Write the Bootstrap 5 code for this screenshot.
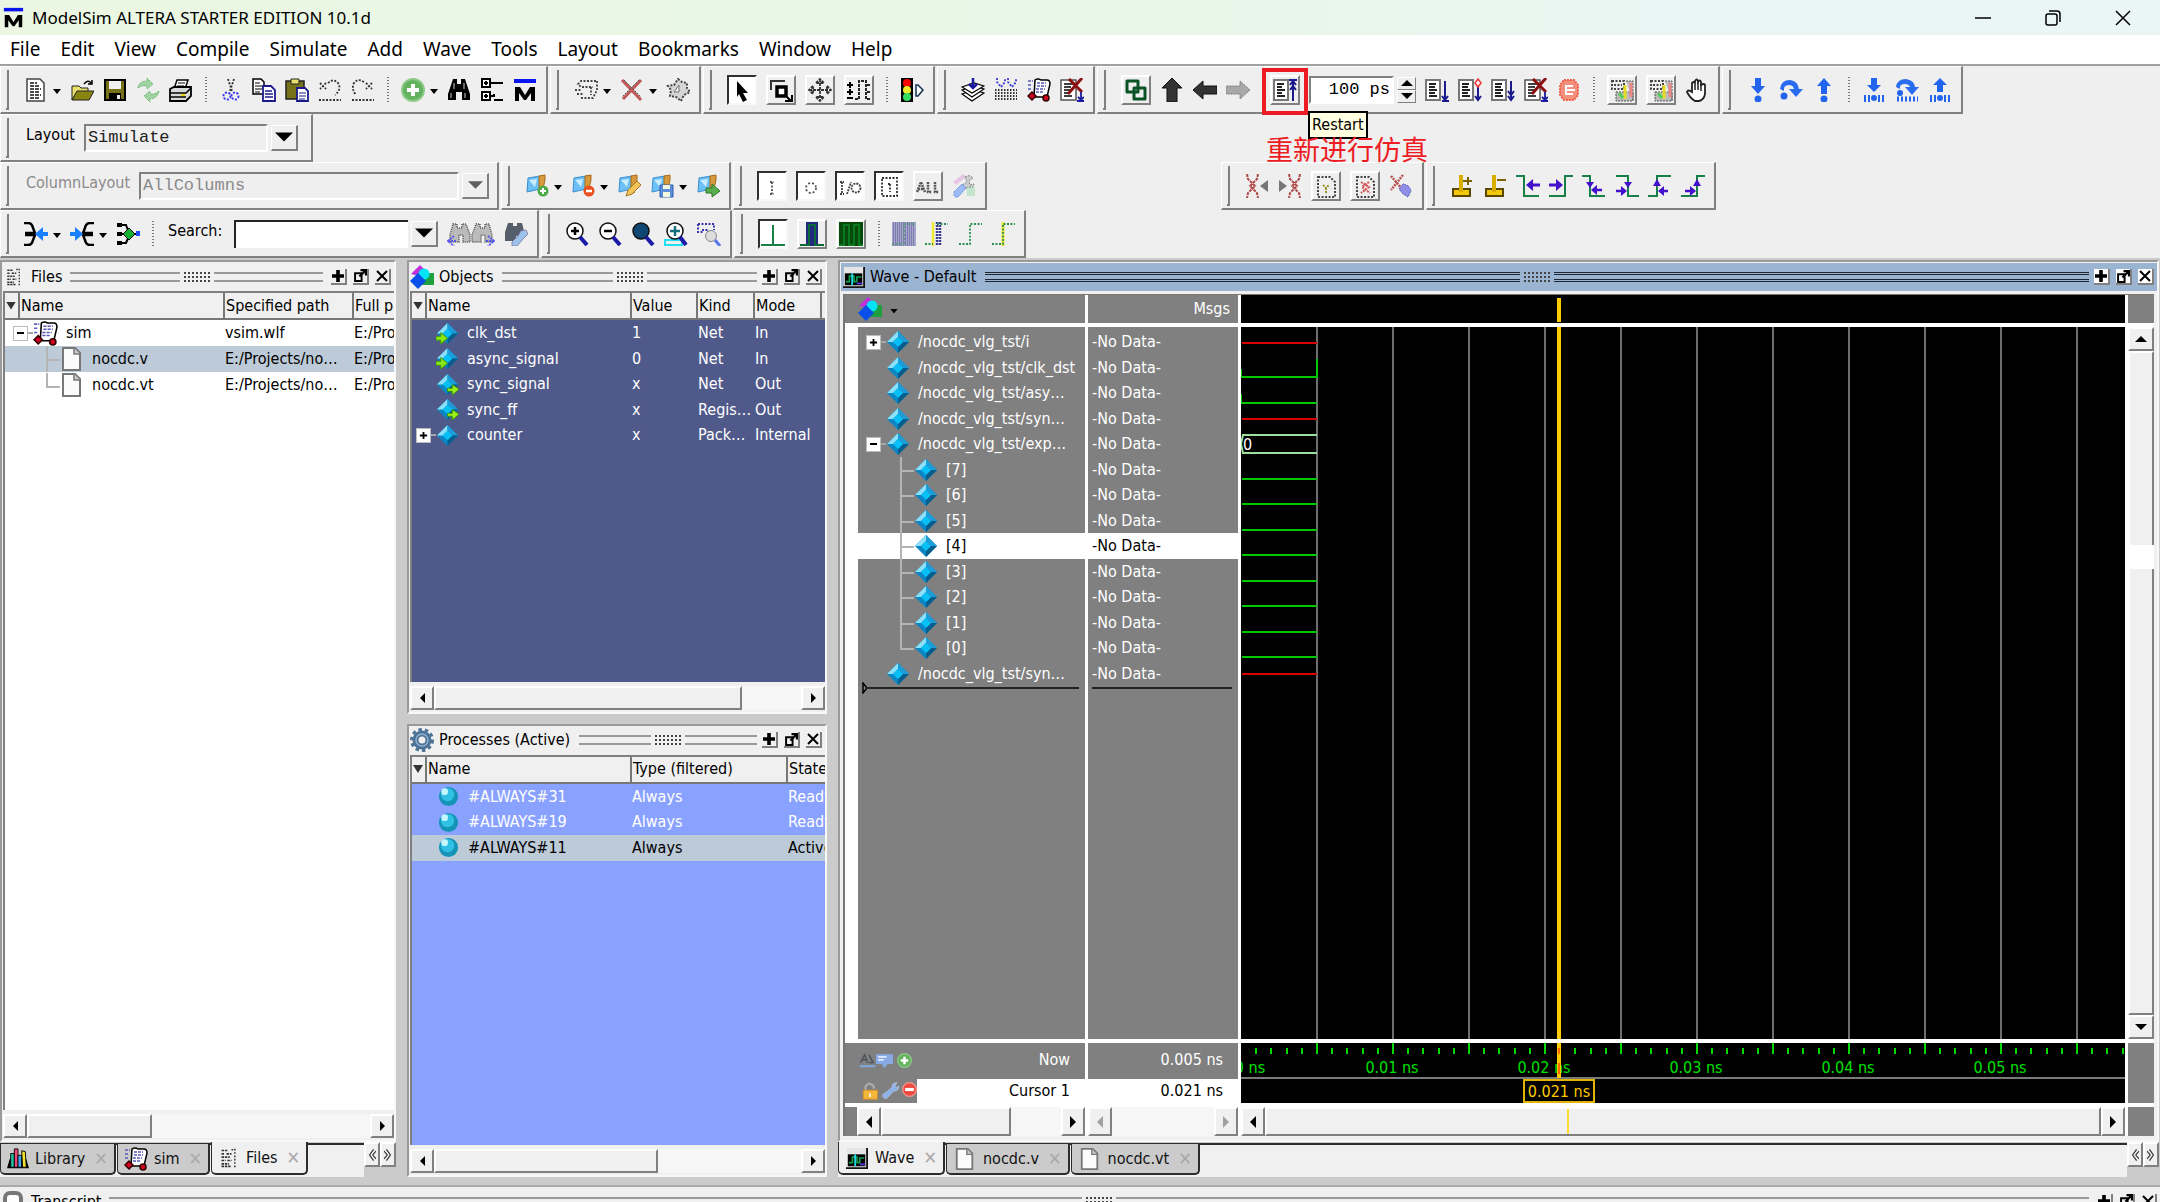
<!DOCTYPE html>
<html lang="en">
<head>
<meta charset="utf-8">
<meta name="viewport" content="width=device-width, initial-scale=1">
<title>ModelSim ALTERA STARTER EDITION 10.1d</title>
<link href="https://cdn.jsdelivr.net/npm/bootstrap@5.3.0/dist/css/bootstrap.min.css" rel="stylesheet">
<style>
  :root { --face:#f0f0f0; --shade:#808080; --desk:#cbcbcb; }
  body { font-family:"DejaVu Sans Condensed","DejaVu Sans",sans-serif; font-size:16px; line-height:20px; color:#000; background:var(--desk); }
  button { font:inherit; color:inherit; padding:0; border:0; background:none; }
  svg { display:block; flex:none; }
  a { color:inherit; text-decoration:none; }

  /* title and menu */
  .titlebar { height:35px; background:linear-gradient(90deg,#ebf7e2,#e8f7e8 55%,#eaf6f5 80%); font-family:"Noto Sans",sans-serif; font-size:17px; padding-left:3px; padding-right:2px; }
  .winbtn { width:70px; height:35px; display:grid; place-items:center; }
  .menubar { height:31px; background:#fff; border-bottom:2px solid #a0a0a0; font-family:"Noto Sans",sans-serif; font-size:19px; gap:20px; padding:0 10px 2px; }

  /* toolbars */
  .toolzone { background:#efefef; }
  .toolrow { height:48px; gap:2px; }
  .tbar { gap:9px; padding:0 9px 0 5px; border:1px solid #fff; border-right:2px solid var(--shade); border-bottom:2px solid var(--shade); height:48px; }
  .grip { width:3px; height:40px; border-right:2px solid var(--shade); border-bottom:2px solid var(--shade); margin-right:6px; }
  .tbar svg { width:24px; height:24px; }
  .tbtn { width:24px; height:26px; flex:none; }
  .framed { width:30px; height:30px; display:grid; place-items:center; border:2px solid #fff; border-right-color:var(--shade); border-bottom-color:var(--shade); flex:none; }
  .pressed { background:#fff; border-color:#303030 #f8f8f8 #f8f8f8 #303030; }
  .caret { width:8px; height:5px; margin-left:-4px; margin-top:4px; background:#000; clip-path:polygon(0 0,100% 0,50% 100%); flex:none; }
  .tsep { width:8px; height:26px; flex:none; background:repeating-linear-gradient(#777 0 1px,transparent 1px 3px) 3px 0/2px 100% no-repeat; }
  .tlabel { font-size:16px; padding-bottom:6px; margin-left:2px; }
  .tlabel-search { width:57px; }
  .mono { font-family:"Liberation Mono",monospace; font-size:17px; }
  .sunk { height:28px; border:2px solid #fff; border-top-color:var(--shade); border-left-color:var(--shade); background:transparent; border-radius:0; padding:0 2px; outline:0; }
  select.sunk { appearance:none; color:#222; opacity:1; }
  select.sunk:disabled, .off { color:#8a8a8a; }
  .dropbtn { width:27px; height:26px; display:grid; place-items:center; border:1px solid #fff; border-right:2px solid var(--shade); border-bottom:2px solid var(--shade); flex:none; }
  .combo { gap:3px; }
  .runlen { width:85px; }
  .spinbtn { width:19px; height:13px; display:grid; place-items:center; border:1px solid #fff; border-right-color:var(--shade); border-bottom-color:var(--shade); }
  .restart-slot { position:relative; margin-left:-6px; }
  .markbox { position:absolute; left:-8px; top:-7px; width:46px; height:47px; border:4px solid #ed1c24; }
  .tipbox { position:absolute; left:38px; top:36px; background:#ffffe1; border:2px solid #000; padding:2px; z-index:3; line-height:20px; }
  .note { position:absolute; left:-4px; top:58px; z-index:4; color:#ed1c24; font:27px/32px "Noto Sans CJK SC",sans-serif; white-space:nowrap; }
  .gapbar { margin-left:232px; }

  /* panes */
  .workspace { display:grid; grid-template-columns:396px 420px 1fr; column-gap:11px; padding:2px 1px 0 0; min-height:0; }
  .pane { background:var(--face); border:2px solid #9a9a9a; border-right-color:#f8f8f8; border-bottom-color:#f8f8f8; min-width:0; min-height:0; }
  .phead { height:29px; padding:0 3px 0 3px; gap:8px; flex:none; }
  .phead-wide { padding-left:1px; gap:5px; }
  .rail { flex:1; height:10px; border-top:2px solid #999; border-bottom:2px solid #999; }
  .rails { gap:3px; flex:1; }
  .dots { width:28px; height:12px; background:radial-gradient(circle,#444 1px,transparent 1px) 0 0/4px 4px; }
  .pbtns { gap:6px; }
  .pbtn { width:16px; height:16px; border-right:2px solid var(--shade); border-bottom:2px solid var(--shade); display:grid; place-items:center; }
  .sheet { border-left:2px solid var(--shade); border-top:2px solid var(--shade); margin:0 0 0 1px; min-height:0; overflow:hidden; }
  .sheet table { table-layout:fixed; width:100%; border-collapse:separate; border-spacing:0; white-space:nowrap; }
  .sheet th { height:27px; font-weight:400; background:var(--face); border-right:2px solid #777; border-bottom:2px solid #777; padding:0 0 0 1px; overflow:hidden; line-height:20px; }
  .sheet th:last-child { border-right:0; }
  .sheet td { padding:0; overflow:hidden; line-height:20px; }
  .sheet tbody tr:nth-child(odd), .wrows li:nth-child(odd) { height:26px; }
  .sheet tbody tr:nth-child(even), .wrows li:nth-child(even) { height:25px; }
  .sorter { width:10px; height:8px; background:#333; clip-path:polygon(0 0,100% 0,50% 100%); }
  .picked td { background:#bdcad7; color:#000; }
  .white { background:#fff; }
  .navy { background:#505a8a; color:#fff; }
  .sky { background:#8aa2ff; color:#fff; }
  .pm { width:15px; height:15px; background:#fff; border:1px solid #bbb; display:grid; place-items:center; flex:none; }
  .stub { width:5px; height:2px; background:#a8a8a8; flex:none; }
  .twig { width:14px; height:26px; border-left:2px solid #b4b4b4; background:linear-gradient(#b4b4b4,#b4b4b4) 0 13px/100% 2px no-repeat; flex:none; }
  .twig-end { height:15px; align-self:flex-start; }
  .in-obj { padding-left:24px; }
  .in-root { padding-left:4px; }
  .in-proc { padding-left:25px; }
  .in-file { padding-left:41px; }

  /* scroll bars */
  .hbar { height:24px; background:#f6f6f6; flex:none; margin:4px 0 2px 1px; }
  .raised { background:var(--face); border:2px solid #fff; border-right-color:var(--shade); border-bottom-color:var(--shade); display:grid; place-items:center; flex:none; }
  .hbar .arrow { width:24px; }

  /* tabs */
  .tabstrip { height:34px; background:var(--face); border-top:2px solid #2c2c2c; flex:none; margin-top:1px; }
  .tabstrip .nav-link { height:31px; padding:0 6px; gap:6px; color:#111; background:#cbcbcb; border:2px solid #2c2c2c; border-top:0; border-left-width:1px; border-radius:0 0 5px 5px; display:flex; align-items:center; margin-top:-1px; margin-right:1px; }
  .tabstrip .nav-link.active { background:var(--face); color:#111; margin-top:-3px; height:33px; }
  .tabx { color:#aaa; margin-left:3px; font-size:18px; }
  .tscroll { width:16px; height:25px; }

  /* wave window */
  .wavehead { background:#9ab4d2; height:28px; margin:1px 0 3px 1px; padding-left:2px; gap:5px; padding-right:3px; }
  .wavehead .rail { border-top:3px double #1c2733; border-bottom:3px double #1c2733; }
  .wavegrid { display:grid; grid-template-columns:240px 150px 1fr 26px; column-gap:3px; background:#fff; margin:0 3px 4px 3px; border-left:2px solid #777; border-top:1px solid #777; min-height:0; }
  .wcol { display:flex; flex-direction:column; gap:4px; min-width:0; min-height:0; }
  .wtop { height:28px; flex:none; }
  .wbody { flex:1; min-height:0; overflow:hidden; }
  .wtime { height:60px; flex:none; }
  .wscroll { height:29px; flex:none; }
  .grey { background:#808080; color:#fff; }
  .black { background:#000; }
  .wrows { list-style:none; margin:0; padding:2px 0 0; white-space:nowrap; }
  .wrows li { display:flex; align-items:center; padding-left:4px; }
  .wrows .w-root { padding-left:8px; }
  .wrows .w-sig { padding-left:28px; }
  .wrows .w-bit { padding-left:42px; }
  .wrows .sel { background:#fff; color:#000; }
  .insrow { height:4px; }
  .insline { height:2px; background:#222; margin:0 6px 0 4px; }
  .nowrow { height:36px; padding-bottom:2px; padding-right:15px; }
  .curval { padding:2px 15px 0 0; }
  .wave-svg { width:100%; height:100%; font-family:"DejaVu Sans Condensed","DejaVu Sans",sans-serif; font-size:16px; }
  .transcript { height:17px; overflow:hidden; background:var(--face); border-top:2px solid #aaa; flex:none; }
</style>
<script src="https://cdn.jsdelivr.net/npm/bootstrap@5.3.0/dist/js/bootstrap.bundle.min.js"></script>
</head>
<body class="vh-100 overflow-hidden d-flex flex-column">

<svg width="0" height="0" class="position-absolute" aria-hidden="true">
  <defs>
    <g id="flagbase"><path d="M3 4l12-2v13l-13 3z" fill="#6cc0f5" stroke="#3a8fd0"/><path d="M4 6l8-1-2 8z" fill="#c9ecff"/><path d="M14 2l6-1v5l-3 13h-3z" fill="#d99a3d" stroke="#a56a1c"/></g>
    <g id="simpage"><path d="M8 2q3-2 6 0h6q3 0 3 4l-3 13H7z" fill="#fff" stroke="#000" stroke-width="1.500"/><path d="M1 3h5M1 7h4M1 11h3M10 5h9M10 8h9M9 11h9M9 14h8" stroke="#5a5ab8" stroke-width="1.500" stroke-dasharray="3 1"/><path d="M1 18l4-4 4 4-4 4z" fill="#d00020" stroke="#300" stroke-width="1.500"/><circle cx="19" cy="20" r="3" fill="#d00020" stroke="#300" stroke-width="1.500"/></g>
  </defs>
  <symbol id="logo" viewBox="0 0 24 24"><path d="M1 1h22v4H1z" fill="#0a14f0"/><path d="M2 23V9h5l5 8 5-8h5v14h-4v-8l-5 7h-2l-5-7v8z"/></symbol>
  <symbol id="new" viewBox="0 0 24 24"><path d="M3 1h13l4 4v18H3z" fill="#fff" stroke="#444" stroke-width="1.500"/><path d="M6 5h7M6 8h9M6 11h11M6 14h9M6 17h11M6 20h9" stroke="#111" stroke-width="1.500" stroke-dasharray="4 1"/></symbol>
  <symbol id="open" viewBox="0 0 24 24"><path d="M2 8h7l2 2h7v4H7l-5 8z" fill="#e8e06a" stroke="#222"/><path d="M2 22l5-9h17l-5 9z" fill="#8a8410" stroke="#222"/><path d="M14 6q4-5 7-1M22 2v4h-4" fill="none" stroke="#000" stroke-width="1.500"/></symbol>
  <symbol id="save" viewBox="0 0 24 24"><path d="M2 2h20v20H2z" fill="#77711a" stroke="#000" stroke-width="2"/><path d="M6 3h12v8H6z" fill="#f0f0f0"/><path d="M6 15h12v7H6z"/><path d="M14 17h3v4h-3z" fill="#eee"/></symbol>
  <symbol id="reload" viewBox="0 0 24 24"><g fill="#9fd3a0" stroke="#6fb572" stroke-dasharray="2 1"><path d="M2 10q1-7 9-7V0l6 6-6 5V8q-5-1-9 2z"/><path d="M23 13q-1 7-9 8v3l-6-6 6-5v3q5 1 9-3z"/></g></symbol>
  <symbol id="print" viewBox="0 0 24 24"><path d="M8 2h11l-3 9H5z" fill="#fff" stroke="#000" stroke-width="1.500"/><path d="M9 5h7M8 8h7" stroke="#000"/><path d="M1 11l4-2h17v9l-5 5H1z" fill="#d8d8d8" stroke="#000" stroke-width="1.800"/><path d="M1 15h16l5-5M1 19h16" fill="none" stroke="#000" stroke-width="1.500"/><path d="M12 16h4v2h-4z" fill="#e6d800"/></symbol>
  <symbol id="cut" viewBox="0 0 24 24"><path d="M9 1l4 12M15 1l-4 12" stroke="#333" stroke-width="1.800" stroke-dasharray="2 1.500"/><g fill="none" stroke="#3a3af0" stroke-width="2" stroke-dasharray="2 1.500"><circle cx="8" cy="18" r="3.500"/><circle cx="16" cy="18" r="3.500"/></g></symbol>
  <symbol id="copy" viewBox="0 0 24 24"><path d="M1 1h8l3 3v12H1z" fill="#fff" stroke="#000" stroke-width="1.500"/><path d="M3 5h5M3 8h7M3 11h7M3 14h5" stroke="#000"/><path d="M11 8h8l4 4v11H11z" fill="#fff" stroke="#1a1a8c" stroke-width="1.800"/><path d="M13 13h7M13 16h8M13 19h8" stroke="#1a1a8c" stroke-width="1.500"/></symbol>
  <symbol id="paste" viewBox="0 0 24 24"><path d="M1 3h18v18H1z" fill="#77711a" stroke="#222" stroke-width="1.500"/><path d="M6 1h8v5H6z" fill="#e8e06a" stroke="#222"/><path d="M12 10h8l3 3v10H12z" fill="#fff" stroke="#1a1a8c" stroke-width="1.800"/><path d="M14 15h7M14 18h7M14 21h6" stroke="#1a1a8c"/></symbol>
  <symbol id="undo" viewBox="0 0 24 24"><path d="M2 5l6 6M8 5l-6 6M10 5q5-5 10 0 4 6-3 12M1 22h22" fill="none" stroke="#333" stroke-width="1.800" stroke-dasharray="2 1.500"/></symbol>
  <symbol id="redo" viewBox="0 0 24 24"><path d="M15 5l6 6M21 5l-6 6M13 4Q7 0 3 5q-3 6 2 12M1 22h22" fill="none" stroke="#333" stroke-width="1.800" stroke-dasharray="2 1.500"/></symbol>
  <symbol id="plus" viewBox="0 0 24 24"><circle cx="12" cy="12" r="11" fill="#62b25f" stroke="#8ccb86" stroke-width="2"/><path d="M12 6v12M6 12h12" stroke="#fff" stroke-width="4"/></symbol>
  <symbol id="minus" viewBox="0 0 24 24"><circle cx="12" cy="12" r="11" fill="#ee4a42" stroke="#f49a90" stroke-width="2"/><path d="M5 12h14" stroke="#fff" stroke-width="5"/></symbol>
  <symbol id="find" viewBox="0 0 24 24"><path d="M6 1h4v5h4V1h4l2 6 3 9v6h-8v-8H9v8H1v-6l3-9z"/><path d="M4 15v5M18 15v5M7 5v6M17 5v6" stroke="#ccc"/></symbol>
  <symbol id="boxes" viewBox="0 0 24 24"><path d="M2 1h8v8H2zM2 14h8v8H2z" fill="#fff" stroke="#000" stroke-width="2"/><path d="M4 5h4M6 3v4M4 18h4M6 16v4M10 5h13M10 18h4v-2M14 22h9" fill="none" stroke="#000" stroke-width="2"/></symbol>
  <symbol id="compile" viewBox="0 0 24 24"><path d="M22 3H7L4 6l3 3h12M23 3v9l-4 8H6M1 12h6M3 16h6M17 9v8" fill="none" stroke="#444" stroke-width="1.800" stroke-dasharray="2 1.500"/></symbol>
  <symbol id="redx" viewBox="0 0 24 24"><path d="M2 2l19 20M21 2L3 21" stroke="#c05858" stroke-width="3"/><path d="M4 2l17 17M19 2L2 19" stroke="#555" stroke-dasharray="2 1"/></symbol>
  <symbol id="gearoff" viewBox="0 0 24 24"><path d="M12 1l4 3 5 1v5l3 4-6 3-3 6-5-4-6-1 1-6-3-4 6-1z" fill="#d5d5d5" stroke="#444" stroke-width="2" stroke-dasharray="2 1.500"/><path d="M8 14l5-7v7z" fill="#eee" stroke="#777"/></symbol>
  <symbol id="cursor" viewBox="0 0 24 24"><path d="M7 3l11 12h-5l4 7-4 2-4-8-2 3z"/></symbol>
  <symbol id="zoomsel" viewBox="0 0 24 24"><path d="M2 12V3h14" fill="none" stroke="#333" stroke-width="2"/><path d="M8 9h9v9H8z" fill="#fff" stroke="#000" stroke-width="3.500"/><path d="M18 19l4 4m1-6v6h-7" fill="none" stroke="#000" stroke-width="2"/></symbol>
  <symbol id="move" viewBox="0 0 24 24"><path d="M12 1v22M1 12h22M8 5l4-4 4 4zM8 19l4 4 4-4zM5 8l-4 4 4 4zM19 8l4 4-4 4z" fill="#fff" stroke="#333" stroke-width="1.800" stroke-dasharray="3 1"/></symbol>
  <symbol id="edges" viewBox="0 0 24 24"><path d="M0 7h6M0 14h6M0 20h6M3 4v6M3 11v6" stroke="#000" stroke-width="2"/><path d="M8 21h4V3h7v18h4M20 7h4M20 14h4" fill="none" stroke="#222" stroke-width="2" stroke-dasharray="3 1"/></symbol>
  <symbol id="traffic" viewBox="0 0 24 24"><path d="M1 0h12v24H1z"/><circle cx="7" cy="5" r="4" fill="#f00"/><circle cx="7" cy="12" r="4" fill="#eeea30"/><circle cx="7" cy="19" r="4" fill="#35e060"/><path d="M16 7h2l5 5-5 6h-2z" fill="#fff" stroke="#135" stroke-width="1.500"/></symbol>
  <symbol id="stack" viewBox="0 0 24 24"><g fill="#fff" stroke="#000" stroke-width="1.200"><path d="M1 16l12-4 10 3-12 8z"/><path d="M1 12l12-4 10 3-12 8z"/><path d="M1 9l12-4 10 3-12 7z"/></g><path d="M12 0v9M8 6l4 4 4-4" stroke="#1a1aa0" stroke-width="2.500" fill="none"/></symbol>
  <symbol id="stackoff" viewBox="0 0 24 24"><path d="M3 0v4l4 5 4-5V0M14 0v4l4 5 4-5V0" fill="none" stroke="#3a3ad0" stroke-width="1.800" stroke-dasharray="2 1.500"/><path d="M1 12h22M1 15h22M1 18h22M1 21h22" stroke="#333" stroke-width="1.800" stroke-dasharray="1.500 1.500"/></symbol>
  <symbol id="sim" viewBox="0 0 24 24"><use href="#simpage"/></symbol>
  <symbol id="simstop" viewBox="0 0 24 24"><path d="M1 2h15v20H1z" fill="#fff" stroke="#555" stroke-width="1.500"/><path d="M4 6h9M4 9h7M4 12h8M4 15h6M4 18h8" stroke="#000" stroke-width="1.500"/><path d="M9 1l13 13M22 0L8 16" stroke="#8b1010" stroke-width="3"/><path d="M21 14v8M18 19l3 3 3-3M17 23h7" stroke="#1a1aa0" stroke-width="1.800" fill="none"/></symbol>
  <symbol id="env" viewBox="0 0 24 24"><path d="M3 3h11v11H3zM10 10h11v11H10z" fill="none" stroke="#0b5224" stroke-width="3" stroke-linejoin="round"/></symbol>
  <symbol id="up" viewBox="0 0 24 24"><path d="M12 0l10 10h-5v14H7V10H2z" fill="#333" stroke="#111"/></symbol>
  <symbol id="left" viewBox="0 0 24 24"><path d="M0 12l10-9v5h14v8H10v5z" fill="#333" stroke="#111"/></symbol>
  <symbol id="right" viewBox="0 0 24 24"><path d="M24 12l-10-9v5H0v8h14v5z" fill="#a8a8a8" stroke="#777" stroke-dasharray="2 1"/></symbol>
  <symbol id="restart" viewBox="0 0 24 24"><path d="M1 2h14v20H1z" fill="#fff" stroke="#777" stroke-width="2"/><path d="M4 6h7M4 9h5M4 12h8M4 15h5M4 18h8" stroke="#222" stroke-width="1.800"/><path d="M20 23V3M16 2h8M17 7l3-4 3 4M17 12l3-4 3 4" fill="none" stroke="#1a1a8c" stroke-width="2"/></symbol>
  <symbol id="run1" viewBox="0 0 24 24"><path d="M1 2h14v20H1z" fill="#fff" stroke="#777" stroke-width="2"/><path d="M4 6h7M4 9h6M4 12h8M4 15h6M4 18h8" stroke="#222" stroke-width="1.800"/><path d="M20 3v19M17 18l3 4 3-4M17 23h7" fill="none" stroke="#1a1a8c" stroke-width="2"/></symbol>
  <symbol id="run2" viewBox="0 0 24 24"><path d="M1 2h14v20H1z" fill="#fff" stroke="#777" stroke-width="2"/><path d="M4 6h7M4 9h6M4 12h8M4 15h6M4 18h8" stroke="#222" stroke-width="1.800"/><path d="M20 8v14M17 18l3 4 3-4" fill="none" stroke="#1a1a8c" stroke-width="2"/><path d="M20 1l3 4-3 4-3-4z" fill="#fff" stroke="#e33" stroke-width="1.500"/></symbol>
  <symbol id="run3" viewBox="0 0 24 24"><path d="M1 2h14v20H1z" fill="#fff" stroke="#777" stroke-width="2"/><path d="M4 6h7M4 9h6M4 12h8M4 15h6M4 18h8" stroke="#222" stroke-width="1.800"/><path d="M20 3v19M17 13l3 4 3-4M17 18l3 4 3-4" fill="none" stroke="#1a1a8c" stroke-width="2"/></symbol>
  <symbol id="stop" viewBox="0 0 24 24"><path d="M7 2h10l4 5v10l-4 5H7l-4-5V7z" fill="#f3907c" stroke="#ef5f48" stroke-width="2" stroke-dasharray="2 1"/><path d="M16 8H9v8h7M9 12h9" fill="none" stroke="#fff" stroke-width="2"/></symbol>
  <symbol id="prof" viewBox="0 0 24 24"><path d="M2 3h12v8H2zM4 7h8" fill="none" stroke="#444" stroke-width="2" stroke-dasharray="2 1.500"/><path d="M6 14h17v9H6zM16 3h7v20" fill="#bbb" stroke="#555" stroke-dasharray="2 1"/><path d="M15 7v14" stroke="#e6dc28" stroke-width="3"/><path d="M21 5v14" stroke="#e88" stroke-width="3"/><path d="M9 15l4 5" stroke="#5c5" stroke-width="3"/></symbol>
  <symbol id="hand" viewBox="0 0 24 24"><path d="M7 14V5q2-2 3 0V3q2-3 3 0v1q2-3 3 0v3q3-2 4 0v9q-1 6-6 7h-4q-5-3-8-9 1-3 5 0z" fill="#fff" stroke="#222" stroke-width="1.800"/><path d="M10 5v7M13 4v8M16 6v7" stroke="#222" stroke-width="1.500"/></symbol>
  <symbol id="stepin" viewBox="0 0 24 24"><path d="M9 0h6v8h4l-7 8-7-8h4z" fill="#2264ee"/><circle cx="12" cy="21" r="3.500" fill="#2264ee"/></symbol>
  <symbol id="stepover" viewBox="0 0 24 24"><path d="M1 11Q2 2 11 2q8 1 9 9h4l-7 8-7-8h5q-1-4-5-4-6 0-5 6z" fill="#2a6cf0"/><circle cx="5" cy="18" r="3.500" fill="#2264ee"/></symbol>
  <symbol id="stepout" viewBox="0 0 24 24"><path d="M9 16h6V8h4l-7-8-7 8h4z" fill="#2264ee"/><circle cx="12" cy="21" r="3.500" fill="#2264ee"/></symbol>
  <symbol id="stepinc" viewBox="0 0 24 24"><path d="M9 0h6v7h4l-7 7-7-7h4z" fill="#2264ee"/><path d="M3 17v7M7 17v7M17 17v7M21 17v7" stroke="#2264ee" stroke-width="2"/><circle cx="12" cy="20" r="3" fill="#2264ee"/></symbol>
  <symbol id="stepoverc" viewBox="0 0 24 24"><path d="M1 9Q2 1 11 1q8 1 9 8h4l-7 8-7-8h5q-1-3-5-3-6 0-5 5z" fill="#2a6cf0"/><circle cx="5" cy="15" r="3" fill="#2264ee"/><path d="M2 21h21" stroke="#2264ee" stroke-width="5" stroke-dasharray="2 2"/></symbol>
  <symbol id="stepoutc" viewBox="0 0 24 24"><path d="M9 14h6V7h4l-7-7-7 7h4z" fill="#2264ee"/><path d="M3 17v7M7 17v7M17 17v7M21 17v7" stroke="#2264ee" stroke-width="2"/><circle cx="12" cy="20" r="3" fill="#2264ee"/></symbol>
  <symbol id="bmadd" viewBox="0 0 24 24"><use href="#flagbase"/><circle cx="18" cy="17" r="5.500" fill="#4fa84a"/><path d="M18 14v6M15 17h6" stroke="#fff" stroke-width="2"/></symbol>
  <symbol id="bmdel" viewBox="0 0 24 24"><use href="#flagbase"/><circle cx="18" cy="17" r="5.500" fill="#e8501e"/><path d="M15 17h6" stroke="#fff" stroke-width="2.500"/></symbol>
  <symbol id="bmedit" viewBox="0 0 24 24"><use href="#flagbase"/><path d="M9 22l2-6 9-9 4 4-9 9z" fill="#f2c45a" stroke="#a87820"/></symbol>
  <symbol id="bmsave" viewBox="0 0 24 24"><use href="#flagbase"/><path d="M10 11h13v12H10z" fill="#5b8edb" stroke="#2c5faf"/><path d="M13 11h7v4h-7zM13 18h7v5h-7z" fill="#f2f8e0"/></symbol>
  <symbol id="bmgo" viewBox="0 0 24 24"><use href="#flagbase"/><path d="M10 14h6v-4l8 7-8 6v-4h-6z" fill="#58ad4d" stroke="#2f7a28"/></symbol>
  <symbol id="sI" viewBox="0 0 24 24"><path d="M10 8h4M12 8v12M10 20h4" stroke="#555" stroke-width="1.800" stroke-dasharray="2 1.500"/></symbol>
  <symbol id="sO" viewBox="0 0 24 24"><circle cx="12" cy="14" r="5" fill="none" stroke="#555" stroke-width="1.800" stroke-dasharray="2 2"/></symbol>
  <symbol id="sIO" viewBox="0 0 24 24"><path d="M4 8v12M2 8h4M2 20h4M9 20l4-12" stroke="#444" stroke-width="1.800" stroke-dasharray="2 1"/><circle cx="18" cy="14" r="4.500" fill="none" stroke="#444" stroke-width="1.800" stroke-dasharray="2 1"/></symbol>
  <symbol id="sBox" viewBox="0 0 24 24"><path d="M5 4h15v18H5zM13 10v8M11 10h3" fill="none" stroke="#333" stroke-width="1.800" stroke-dasharray="2 1.500"/></symbol>
  <symbol id="sAll" viewBox="0 0 24 24"><path d="M1 18l4-10 4 10M2 15h6M12 8v10h4M19 8v10h4" fill="none" stroke="#555" stroke-width="2.500" stroke-dasharray="2 .8"/></symbol>
  <symbol id="tools" viewBox="0 0 24 24"><path d="M1 8l10-8 3 3L4 11z" fill="#e6c6e4"/><path d="M14 8l9 5v9h-8z" fill="#c4e4cc"/><path d="M13 3q5-3 8 1l-4 3 1 4 4-1q0 4-6 3l-3 2-3-4 5-3z" fill="#ccc" stroke="#888" stroke-dasharray="2 1"/><path d="M2 18l8-8 4 4-8 9q-5 1-4-5z" fill="#9dbcf5" stroke="#6688e0" stroke-dasharray="2 1"/></symbol>
  <symbol id="xl" viewBox="0 0 24 24"><path d="M2 0l1 5 7 7-7 7-1 5M13 0l-1 5-7 7 7 7 1 5" fill="none" stroke="#b04848" stroke-width="2" stroke-dasharray="3 1"/><path d="M23 6v12l-8-6z" fill="#777"/></symbol>
  <symbol id="xr" viewBox="0 0 24 24"><path d="M11 0l1 5 7 7-7 7-1 5M22 0l-1 5-7 7 7 7 1 5" fill="none" stroke="#b04848" stroke-width="2" stroke-dasharray="3 1"/><path d="M1 6v12l8-6z" fill="#777"/></symbol>
  <symbol id="pgy" viewBox="0 0 24 24"><path d="M4 3h12l5 5v15H4z" fill="none" stroke="#444" stroke-width="2" stroke-dasharray="2 1.500"/><path d="M9 11l3 3 3-3M12 14v6" fill="none" stroke="#9a9420" stroke-width="2" stroke-dasharray="2 1"/></symbol>
  <symbol id="pgx" viewBox="0 0 24 24"><path d="M4 3h12l5 5v15H4z" fill="none" stroke="#444" stroke-width="2" stroke-dasharray="2 1.500"/><path d="M8 8l8 5-8 6M16 8l-7 5 8 6" fill="none" stroke="#d45050" stroke-width="2" stroke-dasharray="2 1"/></symbol>
  <symbol id="xb" viewBox="0 0 24 24"><path d="M2 2l12 14M14 1L2 16" stroke="#b85050" stroke-width="2.500" stroke-dasharray="2 1"/><path d="M14 10q7 1 8 7l-3 6-5-3-4-5z" fill="#8f8fe8" stroke="#3535b0" stroke-dasharray="1 1"/></symbol>
  <symbol id="curadd" viewBox="0 0 24 24"><path d="M3 15h17v7H3z" fill="#f2c80a" stroke="#5a4800" stroke-width="2"/><path d="M11 1v17" stroke="#d8ae00" stroke-width="4"/><path d="M13 7h9M18 3v8" stroke="#7a6200" stroke-width="2"/></symbol>
  <symbol id="curdel" viewBox="0 0 24 24"><path d="M3 15h17v7H3z" fill="#f2c80a" stroke="#5a4800" stroke-width="2"/><path d="M11 1v17" stroke="#d8ae00" stroke-width="4"/><path d="M14 6h9" stroke="#7a6200" stroke-width="2"/></symbol>
  <symbol id="tprev" viewBox="0 0 24 24"><path d="M0 2h8v20h15" fill="none" stroke="#178048" stroke-width="2"/><path d="M24 11h-8" stroke="#4410cc" stroke-width="3"/><path d="M17 5l-7 6 7 6z" fill="#4410cc"/></symbol>
  <symbol id="tnext" viewBox="0 0 24 24"><path d="M0 22h16V2h8" fill="none" stroke="#178048" stroke-width="2"/><path d="M0 11h8" stroke="#4410cc" stroke-width="3"/><path d="M7 5l7 6-7 6z" fill="#4410cc"/></symbol>
  <symbol id="fprev" viewBox="0 0 24 24"><path d="M0 2h8v20h15" fill="none" stroke="#178048" stroke-width="2"/><path d="M4 8h8l-4 6zM9 16l6-5v10z" fill="#4410cc"/><path d="M13 16h7" stroke="#4410cc" stroke-width="2.500"/></symbol>
  <symbol id="fnext" viewBox="0 0 24 24"><path d="M1 2h12v20h11" fill="none" stroke="#178048" stroke-width="2"/><path d="M9 8h8l-4 6zM12 17l-6-5v10z" fill="#4410cc"/><path d="M1 17h6" stroke="#4410cc" stroke-width="2.500"/></symbol>
  <symbol id="rprev" viewBox="0 0 24 24"><path d="M0 22h9V2h14" fill="none" stroke="#178048" stroke-width="2"/><path d="M5 12h8L9 5zM10 17l6-5v10z" fill="#4410cc"/><path d="M14 17h6" stroke="#4410cc" stroke-width="2.500"/></symbol>
  <symbol id="rnext" viewBox="0 0 24 24"><path d="M0 22h16V2h8" fill="none" stroke="#178048" stroke-width="2"/><path d="M12 12h8l-4-7zM15 17l-6-5v10z" fill="#4410cc"/><path d="M4 17h6" stroke="#4410cc" stroke-width="2.500"/></symbol>
  <symbol id="ebrace" viewBox="0 0 24 24"><path d="M0 1h4q4 0 5 5l2 5H1M1 13h10l-2 5q-1 5-5 5H0" fill="none" stroke="#000" stroke-width="2.500"/><path d="M24 12h-6" stroke="#1a80ff" stroke-width="4"/><path d="M19 5l-8 7 8 7z" fill="#1a80ff"/></symbol>
  <symbol id="ebrace2" viewBox="0 0 24 24"><path d="M24 1h-4q-4 0-5 5l-2 5h10M23 13H13l2 5q1 5 5 5h4" fill="none" stroke="#000" stroke-width="2.500"/><path d="M0 12h6" stroke="#1a80ff" stroke-width="4"/><path d="M5 5l8 7-8 7z" fill="#1a80ff"/></symbol>
  <symbol id="fan" viewBox="0 0 24 24"><path d="M4 3h6l3 8M4 12h6M4 21h6l3-7M15 12h9" fill="none" stroke="#000" stroke-width="2"/><path d="M1 1h5v4H1zM1 10h5v4H1zM1 19h5v4H1z"/><path d="M13 6l6 6-6 6-6-6z" stroke="#000" fill="#18b030"/><path d="M20 9h4v5h-4z" fill="#1a50ff"/></symbol>
  <symbol id="findoff" viewBox="0 0 24 24"><path d="M6 2h4v4h5V2h4l4 11v7h-7v-7h-4v7H3v-7z" fill="#bbb" stroke="#555" stroke-width="1.500" stroke-dasharray="1 1"/><path d="M7 14l-6 5 6 5M1 19h8" fill="none" stroke="#5555f0" stroke-width="2" stroke-dasharray="2 1"/></symbol>
  <symbol id="findoff2" viewBox="0 0 24 24"><path d="M5 2h4v4h5V2h4l3 11v7h-7v-7h-4v7H1v-7z" fill="#bbb" stroke="#555" stroke-width="1.500" stroke-dasharray="1 1"/><path d="M17 14l6 5-6 5M15 19h8" fill="none" stroke="#5555f0" stroke-width="2" stroke-dasharray="2 1"/></symbol>
  <symbol id="findopt" viewBox="0 0 24 24"><path d="M4 1h5v3h4V1h5l2 8-4 5h-4v5H1v-9z" fill="#555f6b"/><path d="M17 9l5-1 2 4-5 5-6 7h-5v-4l6-6z" fill="#9cc2ee" stroke="#88a"/></symbol>
  <symbol id="zin" viewBox="0 0 24 24"><circle cx="10" cy="9" r="8" fill="#fff" stroke="#111" stroke-width="1.500"/><path d="M10 5v8M6 9h8" stroke="#000" stroke-width="2.500"/><path d="M15 15l7 8" stroke="#1a1aa8" stroke-width="4"/></symbol>
  <symbol id="zout" viewBox="0 0 24 24"><circle cx="10" cy="9" r="8" fill="#fff" stroke="#111" stroke-width="1.500"/><path d="M6 9h8" stroke="#000" stroke-width="2.500"/><path d="M15 15l7 8" stroke="#1a1aa8" stroke-width="4"/></symbol>
  <symbol id="zfull" viewBox="0 0 24 24"><circle cx="10" cy="9" r="8" fill="#0e4674" stroke="#111" stroke-width="1.500"/><path d="M15 15l7 8" stroke="#1a1aa8" stroke-width="4"/></symbol>
  <symbol id="zcur" viewBox="0 0 24 24"><path d="M1 18h17v5H1z" fill="none" stroke="#22e0f0" stroke-width="2"/><circle cx="11" cy="9" r="8" fill="#fff" stroke="#111" stroke-width="1.500"/><path d="M11 4v10M6 9h10" stroke="#18707c" stroke-width="2.500"/><path d="M16 15l6 8" stroke="#1a1aa8" stroke-width="4"/></symbol>
  <symbol id="zarea" viewBox="0 0 24 24"><path d="M1 2h16v6M1 2v8h6M5 8h6v10h5" fill="none" stroke="#3434b0" stroke-width="2" stroke-dasharray="2 1.500"/><circle cx="14" cy="14" r="5.500" fill="#ddd" stroke="#888"/><path d="M18 18l5 6" stroke="#5878e8" stroke-width="3"/></symbol>
  <symbol id="w1" viewBox="0 0 24 24"><path d="M0 23h24M12 23V3" stroke="#178048" stroke-width="2" fill="none"/></symbol>
  <symbol id="w2" viewBox="0 0 24 24"><path d="M6 0h12v24H6z" fill="#222a80"/><path d="M0 23h9V3h6v20h9" stroke="#0b6a38" stroke-width="2" fill="none"/></symbol>
  <symbol id="w3" viewBox="0 0 24 24"><path d="M0 0h24v24H0z" fill="#064a0c"/><path d="M0 23h5V3h5v20h5V3h5v20h4" stroke="#0b8a28" stroke-width="1.500" fill="none"/></symbol>
  <symbol id="w4" viewBox="0 0 24 24"><path d="M1 1h22M1 3h22M1 5h22M1 7h22M1 9h22M1 11h22M1 13h22M1 15h22M1 17h22M1 19h22M1 21h22M1 23h22" stroke="#3a3a90" stroke-width="1" stroke-dasharray="1 1"/><path d="M0 0h24v24H0z" fill="#6a6aa8" opacity=".55"/><path d="M0 22h12V2h12" stroke="#5a9a80" fill="none" stroke-width="2" stroke-dasharray="2 2"/></symbol>
  <symbol id="w5" viewBox="0 0 24 24"><path d="M12 0v24M15 0v24" stroke="#3a3a90" stroke-width="2.500" stroke-dasharray="2 1"/><path d="M8 0v24" stroke="#f0ea30" stroke-width="2.500"/><path d="M0 22h8M12 2h11" stroke="#2a9050" stroke-width="2" stroke-dasharray="2 1.500"/></symbol>
  <symbol id="w6" viewBox="0 0 24 24"><path d="M1 22h11V2h12" stroke="#2a9050" stroke-width="1.800" fill="none" stroke-dasharray="2 1.500"/></symbol>
  <symbol id="w7" viewBox="0 0 24 24"><path d="M12 0v24" stroke="#f0ea30" stroke-width="3"/><path d="M1 22h11V2h12" stroke="#2a9050" stroke-width="1.800" fill="none" stroke-dasharray="2 1.500"/></symbol>
  <symbol id="listico" viewBox="0 0 24 24"><path d="M3 3h8M3 7h4M9 7h6M3 11h10M3 15h5M10 15h5M3 19h9M3 22h12" stroke="#333" stroke-width="2" stroke-dasharray="3 1"/><path d="M19 1v22M15 2h4" stroke="#333" stroke-width="1.800" stroke-dasharray="2 2"/></symbol>
  <symbol id="shapes" viewBox="0 0 24 24"><path d="M1 9l9-9 6 6-6 5z" fill="#c030d8"/><path d="M12 8h12v12H12z" fill="#1ea040"/><circle cx="14" cy="9" r="5.500" fill="#00e4f8"/><path d="M0 16l8-8 8 8-8 8z" fill="#0a50e8"/></symbol>
  <symbol id="gear" viewBox="0 0 24 24"><circle cx="12" cy="12" r="6.500" fill="none" stroke="#4d7296" stroke-width="6"/><circle cx="12" cy="12" r="10.500" fill="none" stroke="#4d7296" stroke-width="3" stroke-dasharray="3.500 3"/><circle cx="12" cy="12" r="6" fill="none" stroke="#8db0cf" stroke-width="1.500"/></symbol>
  <symbol id="waveico" viewBox="0 0 24 24"><path d="M1 1h22v22H1z" fill="#e4e4e4"/><path d="M0 23h23V1" fill="none" stroke="#111" stroke-width="2"/><path d="M2 8h19v13H2z"/><path d="M3 17h4v-6h5v6h3v-5h5" fill="none" stroke="#12a050" stroke-width="1.800"/><path d="M10 8v13" stroke="#20d8e8" stroke-width="2"/><path d="M15 19h6" stroke="#53d" stroke-width="2"/></symbol>
  <symbol id="dia" viewBox="0 0 24 24"><path d="M12 1L1 12l11 11 11-11z" fill="#0b86c4"/><path d="M12 1L1 12h6l5-5z" fill="#8be0fa"/><path d="M12 1l11 11h-6l-5-5z" fill="#1c9cd8"/><path d="M23 12L12 23v-6l5-5z" fill="#075d8c"/><path d="M12 7l5 5-5 5-5-5z" fill="#06bff5"/></symbol>
  <symbol id="diain" viewBox="0 0 24 24"><use href="#dia"/><path d="M0 15h5v-4l7 6-7 6v-4H0z" fill="#8ce812" stroke="#3a9a08"/></symbol>
  <symbol id="diaout" viewBox="0 0 24 24"><use href="#dia"/><path d="M12 16h5v-4l7 5-7 6v-4h-5z" fill="#9cf018" stroke="#3a9a08"/></symbol>
  <symbol id="ball" viewBox="0 0 24 24"><circle cx="12" cy="12" r="10" fill="#1594b8"/><circle cx="11" cy="10" r="7" fill="#2fc0e4"/><circle cx="8" cy="7" r="3.500" fill="#c4f6ff"/></symbol>
  <symbol id="file" viewBox="0 0 24 24"><path d="M3 1h12l5 5v17H3z" fill="#fbfbfb" stroke="#777" stroke-width="2"/><path d="M14 1v6h6" fill="#ccc" stroke="#777" stroke-width="1.500"/></symbol>
  <symbol id="books" viewBox="0 0 24 24"><path d="M0 22L3 12h18l3 10z"/><path d="M4 6h4v15H4z" fill="#20c0a0" stroke="#000"/><path d="M8 1h4v20H8z" fill="#f04878" stroke="#000"/><path d="M12 8h4v13h-4z" fill="#40a8f0" stroke="#000"/><path d="M16 3l4 1 1 17h-4z" fill="#f0e030" stroke="#000"/></symbol>
  <symbol id="lock" viewBox="0 0 24 24"><path d="M6 12V6q5-8 11 0v3" fill="none" stroke="#aaa" stroke-width="3"/><path d="M3 11h19v12H3z" fill="#f5b63c" stroke="#d98e1e"/><path d="M12 15v5" stroke="#fff" stroke-width="2"/></symbol>
  <symbol id="wrench" viewBox="0 0 24 24"><path d="M14 8q0-7 7-7l-3 5 3 2 3-3q0 8-8 8L7 23q-6 1-6-5z" fill="#8cb0ea" stroke="#b8cce8"/></symbol>
  <symbol id="pal" viewBox="0 0 24 24"><path d="M0 3h24v14h-8l-4 6-4-6H0z" fill="#88aae4"/><path d="M3 7h12M3 11h8" stroke="#dfeaff" stroke-width="2.500"/></symbol>
  <symbol id="ab" viewBox="0 0 24 24"><path d="M2 15L8 4l4 11M5 11h6M14 4l6 11h-6" fill="none" stroke="#4c5158" stroke-width="2"/><path d="M1 20h22" stroke="#7fa8d8" stroke-width="3"/></symbol>
  <symbol id="pin" viewBox="0 0 10 10"><path d="M5 0v10M0 5h10" stroke="#000" stroke-width="3"/></symbol>
  <symbol id="pms" viewBox="0 0 10 10"><path d="M5 1v8M1 5h8" stroke="#000" stroke-width="2"/></symbol>
  <symbol id="undock" viewBox="0 0 12 12"><path d="M1 4h6v7H1z" fill="none" stroke="#000" stroke-width="1.800"/><path d="M5 7l5-5M6 1h5v5" fill="none" stroke="#000" stroke-width="2"/></symbol>
  <symbol id="shut" viewBox="0 0 12 12"><path d="M1 1l10 10M11 1L1 11" stroke="#000" stroke-width="2"/></symbol>
  <symbol id="al" viewBox="0 0 8 12"><path d="M7 0v12L1 6z"/></symbol>
  <symbol id="ar" viewBox="0 0 8 12"><path d="M1 0v12l6-6z"/></symbol>
  <symbol id="au" viewBox="0 0 12 8"><path d="M0 7h12L6 1z"/></symbol>
  <symbol id="ad" viewBox="0 0 12 8"><path d="M0 1h12L6 7z"/></symbol>
  <symbol id="gl" viewBox="0 0 10 14"><path d="M7 0L2 7l5 7M10 2L6 7l4 5" fill="none" stroke="#333" stroke-width="1.500"/></symbol>
  <symbol id="gr" viewBox="0 0 10 14"><path d="M3 0l5 7-5 7M0 2l4 5-4 5" fill="none" stroke="#333" stroke-width="1.500"/></symbol>
</svg>

<header class="titlebar d-flex align-items-center flex-shrink-0">
  <svg width="21" height="21"><use href="#logo"/></svg>
  <span class="ms-2 me-auto">ModelSim ALTERA STARTER EDITION 10.1d</span>
  <button class="winbtn" aria-label="Minimize"><svg width="16" height="16"><path d="M0 8h16" stroke="#000" stroke-width="1.500"/></svg></button>
  <button class="winbtn" aria-label="Restore"><svg width="16" height="16" fill="none" stroke="#000" stroke-width="1.500"><rect x="1" y="4" width="11" height="11" rx="2"/><path d="M4 1h8q3 0 3 3v8"/></svg></button>
  <button class="winbtn" aria-label="Close"><svg width="16" height="16"><path d="M1 1l14 14M15 1L1 15" stroke="#000" stroke-width="1.500"/></svg></button>
</header>

<nav class="menubar d-flex align-items-center flex-shrink-0">
  <a href="#">File</a><a href="#">Edit</a><a href="#">View</a><a href="#">Compile</a><a href="#">Simulate</a><a href="#">Add</a><a href="#">Wave</a><a href="#">Tools</a><a href="#">Layout</a><a href="#">Bookmarks</a><a href="#">Window</a><a href="#">Help</a>
</nav>

<section class="toolzone flex-shrink-0">
  <div class="toolrow d-flex">
    <div class="tbar d-flex align-items-center"><span class="grip"></span>
      <button class="tbtn" aria-label="New"><svg><use href="#new"/></svg></button><span class="caret"></span>
      <button class="tbtn" aria-label="Open"><svg><use href="#open"/></svg></button>
      <button class="tbtn" aria-label="Save"><svg><use href="#save"/></svg></button>
      <button class="tbtn" aria-label="Reload"><svg><use href="#reload"/></svg></button>
      <button class="tbtn" aria-label="Print"><svg><use href="#print"/></svg></button>
      <span class="tsep"></span>
      <button class="tbtn" aria-label="Cut"><svg><use href="#cut"/></svg></button>
      <button class="tbtn" aria-label="Copy"><svg><use href="#copy"/></svg></button>
      <button class="tbtn" aria-label="Paste"><svg><use href="#paste"/></svg></button>
      <button class="tbtn" aria-label="Undo"><svg><use href="#undo"/></svg></button>
      <button class="tbtn" aria-label="Redo"><svg><use href="#redo"/></svg></button>
      <span class="tsep"></span>
      <button class="tbtn" aria-label="Add"><svg><use href="#plus"/></svg></button><span class="caret"></span>
      <button class="tbtn" aria-label="Find"><svg><use href="#find"/></svg></button>
      <button class="tbtn" aria-label="Collapse all"><svg><use href="#boxes"/></svg></button>
      <button class="tbtn" aria-label="ModelSim"><svg><use href="#logo"/></svg></button>
    </div>
    <div class="tbar d-flex align-items-center"><span class="grip"></span>
      <button class="tbtn" aria-label="Compile"><svg><use href="#compile"/></svg></button><span class="caret"></span>
      <button class="tbtn" aria-label="Compile all"><svg><use href="#redx"/></svg></button><span class="caret"></span>
      <button class="tbtn" aria-label="Simulate"><svg><use href="#gearoff"/></svg></button>
    </div>
    <div class="tbar d-flex align-items-center"><span class="grip"></span>
      <button class="framed pressed" aria-label="Select"><svg><use href="#cursor"/></svg></button>
      <button class="framed" aria-label="Zoom mode"><svg><use href="#zoomsel"/></svg></button>
      <button class="framed" aria-label="Pan mode"><svg><use href="#move"/></svg></button>
      <button class="framed" aria-label="Edit mode"><svg><use href="#edges"/></svg></button>
      <span class="tsep"></span>
      <button class="tbtn" aria-label="Stop drawing"><svg><use href="#traffic"/></svg></button>
    </div>
    <div class="tbar d-flex align-items-center"><span class="grip"></span>
      <button class="tbtn" aria-label="Compile file"><svg><use href="#stack"/></svg></button>
      <button class="tbtn" aria-label="Compile out of date"><svg><use href="#stackoff"/></svg></button>
      <button class="tbtn" aria-label="Start simulation"><svg><use href="#sim"/></svg></button>
      <button class="tbtn" aria-label="End simulation"><svg><use href="#simstop"/></svg></button>
    </div>
    <div class="tbar d-flex align-items-center"><span class="grip"></span>
      <button class="framed" aria-label="Environment"><svg><use href="#env"/></svg></button>
      <button class="tbtn" aria-label="Up"><svg><use href="#up"/></svg></button>
      <button class="tbtn" aria-label="Back"><svg><use href="#left"/></svg></button>
      <button class="tbtn" aria-label="Forward"><svg><use href="#right"/></svg></button>
      <span class="tsep"></span>
      <div class="restart-slot">
        <button class="framed" aria-label="Restart"><svg><use href="#restart"/></svg></button>
        <span class="markbox"></span>
        <span class="tipbox">Restart</span>
        <span class="note">重新进行仿真</span>
      </div>
      <div class="d-flex combo align-items-center">
        <input class="sunk mono white text-end runlen" value="100 ps" aria-label="Run length">
        <div class="d-flex flex-column">
          <button class="spinbtn" aria-label="Increase"><svg style="width:12px;height:8px"><use href="#au"/></svg></button>
          <button class="spinbtn" aria-label="Decrease"><svg style="width:12px;height:8px"><use href="#ad"/></svg></button>
        </div>
      </div>
      <button class="tbtn" aria-label="Run"><svg><use href="#run1"/></svg></button>
      <button class="tbtn" aria-label="Continue"><svg><use href="#run2"/></svg></button>
      <button class="tbtn" aria-label="Run all"><svg><use href="#run3"/></svg></button>
      <button class="tbtn" aria-label="Break"><svg><use href="#simstop"/></svg></button>
      <button class="tbtn" aria-label="Stop"><svg><use href="#stop"/></svg></button>
      <span class="tsep"></span>
      <button class="framed" aria-label="Performance"><svg><use href="#prof"/></svg></button>
      <button class="framed" aria-label="Memory"><svg><use href="#prof"/></svg></button>
      <button class="tbtn" aria-label="Hand"><svg><use href="#hand"/></svg></button>
    </div>
    <div class="tbar d-flex align-items-center"><span class="grip"></span>
      <button class="tbtn" aria-label="Step into"><svg><use href="#stepin"/></svg></button>
      <button class="tbtn" aria-label="Step over"><svg><use href="#stepover"/></svg></button>
      <button class="tbtn" aria-label="Step out"><svg><use href="#stepout"/></svg></button>
      <span class="tsep"></span>
      <button class="tbtn" aria-label="Step into current"><svg><use href="#stepinc"/></svg></button>
      <button class="tbtn" aria-label="Step over current"><svg><use href="#stepoverc"/></svg></button>
      <button class="tbtn" aria-label="Step out current"><svg><use href="#stepoutc"/></svg></button>
    </div>
  </div>

  <div class="toolrow d-flex">
    <div class="tbar d-flex align-items-center"><span class="grip"></span>
      <label class="tlabel" for="layout">Layout</label>
      <div class="d-flex combo align-items-center pe-1"><select id="layout" class="sunk mono" style="width:184px"><option>Simulate</option></select>
      <button class="dropbtn" aria-label="Open list"><svg style="width:20px;height:12px"><use href="#ad"/></svg></button></div>
    </div>
  </div>

  <div class="toolrow d-flex">
    <div class="tbar d-flex align-items-center pe-1"><span class="grip"></span>
      <label class="tlabel off" for="columns">ColumnLayout</label>
      <div class="d-flex combo align-items-center pe-1"><select id="columns" disabled class="sunk mono" style="width:320px"><option>AllColumns</option></select>
      <button class="dropbtn" aria-label="Open list"><svg style="width:17px;height:10px;opacity:.6"><use href="#ad"/></svg></button></div>
    </div>
    <div class="tbar d-flex align-items-center"><span class="grip"></span>
      <button class="tbtn" aria-label="Add bookmark"><svg><use href="#bmadd"/></svg></button><span class="caret"></span>
      <button class="tbtn" aria-label="Delete bookmark"><svg><use href="#bmdel"/></svg></button><span class="caret"></span>
      <button class="tbtn" aria-label="Edit bookmark"><svg><use href="#bmedit"/></svg></button>
      <button class="tbtn" aria-label="Save bookmarks"><svg><use href="#bmsave"/></svg></button><span class="caret"></span>
      <button class="tbtn" aria-label="Go to bookmark"><svg><use href="#bmgo"/></svg></button>
    </div>
    <div class="tbar d-flex align-items-center"><span class="grip"></span>
      <button class="framed pressed" aria-label="Inputs"><svg><use href="#sI"/></svg></button>
      <button class="framed pressed" aria-label="Outputs"><svg><use href="#sO"/></svg></button>
      <button class="framed pressed" aria-label="In-outs"><svg><use href="#sIO"/></svg></button>
      <button class="framed pressed" aria-label="Internal"><svg><use href="#sBox"/></svg></button>
      <button class="framed" aria-label="All"><svg><use href="#sAll"/></svg></button>
      <button class="tbtn" aria-label="Filter options"><svg><use href="#tools"/></svg></button>
    </div>
    <div class="tbar gapbar d-flex align-items-center"><span class="grip"></span>
      <button class="tbtn" aria-label="Previous X"><svg><use href="#xl"/></svg></button>
      <button class="tbtn" aria-label="Next X"><svg><use href="#xr"/></svg></button>
      <button class="framed" aria-label="Trace"><svg><use href="#pgy"/></svg></button>
      <button class="framed" aria-label="Trace X"><svg><use href="#pgx"/></svg></button>
      <button class="tbtn" aria-label="Clear"><svg><use href="#xb"/></svg></button>
    </div>
    <div class="tbar d-flex align-items-center"><span class="grip"></span>
      <button class="tbtn" aria-label="Insert cursor"><svg><use href="#curadd"/></svg></button>
      <button class="tbtn" aria-label="Delete cursor"><svg><use href="#curdel"/></svg></button>
      <button class="tbtn" aria-label="Previous transition"><svg><use href="#tprev"/></svg></button>
      <button class="tbtn" aria-label="Next transition"><svg><use href="#tnext"/></svg></button>
      <button class="tbtn" aria-label="Previous falling edge"><svg><use href="#fprev"/></svg></button>
      <button class="tbtn" aria-label="Next falling edge"><svg><use href="#fnext"/></svg></button>
      <button class="tbtn" aria-label="Previous rising edge"><svg><use href="#rprev"/></svg></button>
      <button class="tbtn" aria-label="Next rising edge"><svg><use href="#rnext"/></svg></button>
    </div>
  </div>

  <div class="toolrow d-flex">
    <div class="tbar d-flex align-items-center"><span class="grip"></span>
      <button class="tbtn" aria-label="Drivers"><svg><use href="#ebrace"/></svg></button><span class="caret"></span>
      <button class="tbtn" aria-label="Readers"><svg><use href="#ebrace2"/></svg></button><span class="caret"></span>
      <button class="tbtn" aria-label="Connectivity"><svg><use href="#fan"/></svg></button>
      <span class="tsep"></span>
      <label class="tlabel tlabel-search" for="search">Search:</label>
      <div class="d-flex combo align-items-center"><input id="search" class="sunk white border-dark border-end-0 border-bottom-0" style="width:174px">
      <button class="dropbtn" aria-label="Search history"><svg style="width:20px;height:12px"><use href="#ad"/></svg></button></div>
      <div class="d-flex"><button class="tbtn" aria-label="Find previous"><svg><use href="#findoff"/></svg></button>
      <button class="tbtn" aria-label="Find next"><svg><use href="#findoff2"/></svg></button></div>
      <button class="tbtn" aria-label="Search options"><svg><use href="#findopt"/></svg></button>
    </div>
    <div class="tbar d-flex align-items-center"><span class="grip"></span>
      <button class="tbtn" aria-label="Zoom in"><svg><use href="#zin"/></svg></button>
      <button class="tbtn" aria-label="Zoom out"><svg><use href="#zout"/></svg></button>
      <button class="tbtn" aria-label="Zoom full"><svg><use href="#zfull"/></svg></button>
      <button class="tbtn" aria-label="Zoom on cursor"><svg><use href="#zcur"/></svg></button>
      <button class="tbtn" aria-label="Zoom range"><svg><use href="#zarea"/></svg></button>
    </div>
    <div class="tbar d-flex align-items-center"><span class="grip"></span>
      <button class="framed pressed" aria-label="Leaf names"><svg><use href="#w1"/></svg></button>
      <button class="framed" aria-label="Expand time"><svg><use href="#w2"/></svg></button>
      <button class="framed" aria-label="Expand all"><svg><use href="#w3"/></svg></button>
      <span class="tsep"></span>
      <button class="tbtn" aria-label="Expanded mode"><svg><use href="#w4"/></svg></button>
      <button class="tbtn" aria-label="Expand at cursor"><svg><use href="#w5"/></svg></button>
      <button class="tbtn" aria-label="Collapse time"><svg><use href="#w6"/></svg></button>
      <button class="tbtn" aria-label="Collapse at cursor"><svg><use href="#w7"/></svg></button>
    </div>
  </div>
</section>

<main class="workspace flex-grow-1">
  <!-- Files -->
  <div class="d-flex flex-column pb-2" style="min-height:0">
    <section class="pane d-flex flex-column flex-grow-1">
      <div class="phead d-flex align-items-center">
        <svg width="18" height="20"><use href="#listico"/></svg><span>Files</span>
        <div class="rails d-flex align-items-center"><span class="rail"></span><span class="dots"></span><span class="rail"></span></div>
        <div class="pbtns d-flex"><button class="pbtn" aria-label="Maximize"><svg width="12" height="12"><use href="#pin"/></svg></button><button class="pbtn" aria-label="Undock"><svg width="13" height="13"><use href="#undock"/></svg></button><button class="pbtn" aria-label="Close"><svg width="12" height="12"><use href="#shut"/></svg></button></div>
      </div>
      <div class="sheet white flex-grow-1">
        <table>
          <colgroup><col style="width:15px"><col style="width:205px"><col style="width:129px"><col></colgroup>
          <thead><tr><th><div class="sorter"></div></th><th>Name</th><th>Specified path</th><th>Full path</th></tr></thead>
          <tbody>
            <tr><td colspan="2"><div class="d-flex align-items-center ps-2"><span class="pm"><svg width="7" height="2"><path d="M0 1h7" stroke="#000" stroke-width="2"/></svg></span><span class="stub"></span><svg width="25" height="25"><use href="#sim"/></svg><span class="ps-2">sim</span></div></td><td>vsim.wlf</td><td>E:/Projects</td></tr>
            <tr class="picked"><td colspan="2"><div class="d-flex align-items-center in-file"><span class="twig"></span><svg width="24" height="24"><use href="#file"/></svg><span class="ps-2">nocdc.v</span></div></td><td>E:/Projects/no…</td><td>E:/Projects</td></tr>
            <tr><td colspan="2"><div class="d-flex align-items-center in-file"><span class="twig twig-end"></span><svg width="24" height="24"><use href="#file"/></svg><span class="ps-2">nocdc.vt</span></div></td><td>E:/Projects/no…</td><td>E:/Projects</td></tr>
          </tbody>
        </table>
      </div>
      <div class="hbar d-flex"><button class="raised arrow" aria-label="Scroll left"><svg width="7" height="10"><use href="#al"/></svg></button><span class="raised" style="width:125px"></span><button class="raised arrow ms-auto" aria-label="Scroll right"><svg width="7" height="10"><use href="#ar"/></svg></button></div>
    </section>
    <div class="d-flex"><nav class="tabstrip d-flex flex-grow-1">
      <a class="nav-link" href="#"><svg width="22" height="22"><use href="#books"/></svg>Library<span class="tabx">✕</span></a>
      <a class="nav-link" href="#"><svg width="24" height="24"><use href="#sim"/></svg>sim<span class="tabx">✕</span></a>
      <a class="nav-link active" href="#"><svg width="22" height="20"><use href="#listico"/></svg>Files<span class="tabx">✕</span></a>
    </nav><button class="raised tscroll" aria-label="Previous tab"><svg width="8" height="12"><use href="#gl"/></svg></button><button class="raised tscroll" aria-label="Next tab"><svg width="8" height="12"><use href="#gr"/></svg></button></div>
  </div>

  <!-- Objects and Processes -->
  <div class="d-grid pb-2" style="grid-template-rows:1fr 1fr;row-gap:10px;min-height:0">
    <section class="pane d-flex flex-column">
      <div class="phead phead-wide d-flex align-items-center">
        <svg width="24" height="24"><use href="#shapes"/></svg><span>Objects</span>
        <div class="rails d-flex align-items-center ms-1"><span class="rail"></span><span class="dots"></span><span class="rail"></span></div>
        <div class="pbtns d-flex"><button class="pbtn" aria-label="Maximize"><svg width="12" height="12"><use href="#pin"/></svg></button><button class="pbtn" aria-label="Undock"><svg width="13" height="13"><use href="#undock"/></svg></button><button class="pbtn" aria-label="Close"><svg width="12" height="12"><use href="#shut"/></svg></button></div>
      </div>
      <div class="sheet navy flex-grow-1">
        <table>
          <colgroup><col style="width:15px"><col style="width:205px"><col style="width:66px"><col style="width:57px"><col style="width:67px"><col></colgroup>
          <thead class="text-black"><tr><th><div class="sorter"></div></th><th>Name</th><th>Value</th><th>Kind</th><th>Mode</th><th></th></tr></thead>
          <tbody>
            <tr><td colspan="2"><div class="d-flex align-items-center in-obj"><svg width="23" height="23"><use href="#diain"/></svg><span class="ps-2">clk_dst</span></div></td><td>1</td><td>Net</td><td colspan="2">In</td></tr>
            <tr><td colspan="2"><div class="d-flex align-items-center in-obj"><svg width="23" height="23"><use href="#diain"/></svg><span class="ps-2">async_signal</span></div></td><td>0</td><td>Net</td><td colspan="2">In</td></tr>
            <tr><td colspan="2"><div class="d-flex align-items-center in-obj"><svg width="23" height="23"><use href="#diaout"/></svg><span class="ps-2">sync_signal</span></div></td><td>x</td><td>Net</td><td colspan="2">Out</td></tr>
            <tr><td colspan="2"><div class="d-flex align-items-center in-obj"><svg width="23" height="23"><use href="#diaout"/></svg><span class="ps-2">sync_ff</span></div></td><td>x</td><td>Regis…</td><td colspan="2">Out</td></tr>
            <tr><td colspan="2"><div class="d-flex align-items-center in-root"><span class="pm"><svg width="9" height="9"><use href="#pms"/></svg></span><span class="stub"></span><svg width="23" height="23"><use href="#dia"/></svg><span class="ps-2">counter</span></div></td><td>x</td><td>Pack…</td><td colspan="2">Internal</td></tr>
          </tbody>
        </table>
      </div>
      <div class="hbar d-flex"><button class="raised arrow" aria-label="Scroll left"><svg width="7" height="10"><use href="#al"/></svg></button><span class="raised" style="width:308px"></span><button class="raised arrow ms-auto" aria-label="Scroll right"><svg width="7" height="10"><use href="#ar"/></svg></button></div>
    </section>
    <section class="pane d-flex flex-column">
      <div class="phead phead-wide d-flex align-items-center">
        <svg width="24" height="24"><use href="#gear"/></svg><span>Processes (Active)</span>
        <div class="rails d-flex align-items-center ms-1"><span class="rail"></span><span class="dots"></span><span class="rail"></span></div>
        <div class="pbtns d-flex"><button class="pbtn" aria-label="Maximize"><svg width="12" height="12"><use href="#pin"/></svg></button><button class="pbtn" aria-label="Undock"><svg width="13" height="13"><use href="#undock"/></svg></button><button class="pbtn" aria-label="Close"><svg width="12" height="12"><use href="#shut"/></svg></button></div>
      </div>
      <div class="sheet sky flex-grow-1">
        <table>
          <colgroup><col style="width:15px"><col style="width:205px"><col style="width:156px"><col></colgroup>
          <thead class="text-black"><tr><th><div class="sorter"></div></th><th>Name</th><th>Type (filtered)</th><th>State</th></tr></thead>
          <tbody>
            <tr><td colspan="2"><div class="d-flex align-items-center in-proc"><svg width="23" height="23"><use href="#ball"/></svg><span class="ps-2">#ALWAYS#31</span></div></td><td>Always</td><td>Ready</td></tr>
            <tr><td colspan="2"><div class="d-flex align-items-center in-proc"><svg width="23" height="23"><use href="#ball"/></svg><span class="ps-2">#ALWAYS#19</span></div></td><td>Always</td><td>Ready</td></tr>
            <tr class="picked"><td colspan="2"><div class="d-flex align-items-center in-proc"><svg width="23" height="23"><use href="#ball"/></svg><span class="ps-2">#ALWAYS#11</span></div></td><td>Always</td><td>Active</td></tr>
          </tbody>
        </table>
      </div>
      <div class="hbar d-flex"><button class="raised arrow" aria-label="Scroll left"><svg width="7" height="10"><use href="#al"/></svg></button><span class="raised" style="width:224px"></span><button class="raised arrow ms-auto" aria-label="Scroll right"><svg width="7" height="10"><use href="#ar"/></svg></button></div>
    </section>
  </div>

  <!-- Wave -->
  <div class="d-flex flex-column pb-2" style="min-height:0;min-width:0">
    <section class="pane d-flex flex-column flex-grow-1">
      <div class="phead wavehead d-flex align-items-center">
        <svg width="22" height="22"><use href="#waveico"/></svg><span>Wave - Default</span>
        <div class="rails d-flex align-items-center ms-1"><span class="rail"></span><span class="dots"></span><span class="rail"></span></div>
        <div class="pbtns d-flex"><button class="pbtn white" aria-label="Maximize"><svg width="12" height="12"><use href="#pin"/></svg></button><button class="pbtn white" aria-label="Undock"><svg width="13" height="13"><use href="#undock"/></svg></button><button class="pbtn white" aria-label="Close"><svg width="12" height="12"><use href="#shut"/></svg></button></div>
      </div>
      <div class="wavegrid flex-grow-1">
        <div class="wcol">
          <div class="wtop grey d-flex align-items-center" style="padding-left:13px"><svg width="24" height="24"><use href="#shapes"/></svg><span class="caret ms-2"></span></div>
          <div class="wbody white" style="padding-left:13px"><div class="grey h-100">
            <ul class="wrows">
              <li class="w-root"><span class="pm"><svg width="9" height="9"><use href="#pms"/></svg></span><span class="stub"></span><svg width="24" height="24"><use href="#dia"/></svg><span class="ps-2">/nocdc_vlg_tst/i</span></li>
              <li class="w-sig"><svg width="24" height="24"><use href="#dia"/></svg><span class="ps-2">/nocdc_vlg_tst/clk_dst</span></li>
              <li class="w-sig"><svg width="24" height="24"><use href="#dia"/></svg><span class="ps-2">/nocdc_vlg_tst/asy…</span></li>
              <li class="w-sig"><svg width="24" height="24"><use href="#dia"/></svg><span class="ps-2">/nocdc_vlg_tst/syn…</span></li>
              <li class="w-root"><span class="pm"><svg width="7" height="2"><path d="M0 1h7" stroke="#000" stroke-width="2"/></svg></span><span class="stub"></span><svg width="24" height="24"><use href="#dia"/></svg><span class="ps-2">/nocdc_vlg_tst/exp…</span></li>
              <li class="w-bit"><span class="twig"></span><svg width="24" height="24"><use href="#dia"/></svg><span class="ps-2">[7]</span></li>
              <li class="w-bit"><span class="twig"></span><svg width="24" height="24"><use href="#dia"/></svg><span class="ps-2">[6]</span></li>
              <li class="w-bit"><span class="twig"></span><svg width="24" height="24"><use href="#dia"/></svg><span class="ps-2">[5]</span></li>
              <li class="w-bit sel"><span class="twig"></span><svg width="24" height="24"><use href="#dia"/></svg><span class="ps-2">[4]</span></li>
              <li class="w-bit"><span class="twig"></span><svg width="24" height="24"><use href="#dia"/></svg><span class="ps-2">[3]</span></li>
              <li class="w-bit"><span class="twig"></span><svg width="24" height="24"><use href="#dia"/></svg><span class="ps-2">[2]</span></li>
              <li class="w-bit"><span class="twig"></span><svg width="24" height="24"><use href="#dia"/></svg><span class="ps-2">[1]</span></li>
              <li class="w-bit"><span class="twig twig-end"></span><svg width="24" height="24"><use href="#dia"/></svg><span class="ps-2">[0]</span></li>
              <li class="w-sig"><svg width="24" height="24"><use href="#dia"/></svg><span class="ps-2">/nocdc_vlg_tst/syn…</span></li>
            </ul>
            <div class="insrow d-flex align-items-center"><svg width="6" height="12" class="ms-1"><path d="M1 1v10l4-5z" fill="none" stroke="#000" stroke-width="1.500"/></svg><div class="insline flex-grow-1 ms-0"></div></div>
          </div></div>
          <div class="wtime grey d-flex flex-column">
            <div class="nowrow d-flex align-items-center" style="padding-left:14px"><svg width="17" height="17"><use href="#ab"/></svg><svg width="17" height="17"><use href="#pal"/></svg><svg width="15" height="15" class="ms-1"><use href="#plus"/></svg><span class="ms-auto">Now</span></div>
            <div class="d-flex align-items-center flex-grow-1"><div class="d-flex" style="width:72px;padding-left:16px;gap:3px"><svg width="18" height="18"><use href="#lock"/></svg><svg width="17" height="17"><use href="#wrench"/></svg><svg width="15" height="15"><use href="#minus"/></svg></div><div class="white text-black text-end h-100 flex-grow-1 curval">Cursor 1</div></div>
          </div>
          <div class="wscroll grey d-flex" style="padding-left:12px"><div class="hbar m-0 h-100 d-flex flex-grow-1"><button class="raised arrow" aria-label="Scroll left"><svg width="8" height="12"><use href="#al"/></svg></button><span class="raised" style="width:130px"></span><button class="raised arrow ms-auto" aria-label="Scroll right"><svg width="8" height="12"><use href="#ar"/></svg></button></div></div>
        </div>

        <div class="wcol">
          <div class="wtop grey text-end pt-1 pe-2">Msgs</div>
          <div class="wbody grey">
            <ul class="wrows">
              <li>-No Data-</li><li>-No Data-</li><li>-No Data-</li><li>-No Data-</li><li>-No Data-</li><li>-No Data-</li><li>-No Data-</li><li>-No Data-</li><li class="sel">-No Data-</li><li>-No Data-</li><li>-No Data-</li><li>-No Data-</li><li>-No Data-</li><li>-No Data-</li>
            </ul>
            <div class="insrow d-flex align-items-center"><div class="insline flex-grow-1"></div></div>
          </div>
          <div class="wtime grey d-flex flex-column"><div class="nowrow d-flex align-items-center justify-content-end">0.005 ns</div><div class="white text-black text-end flex-grow-1 curval">0.021 ns</div></div>
          <div class="wscroll hbar m-0 d-flex off"><button class="raised arrow" aria-label="Scroll left"><svg width="8" height="12" fill="#a0a0a0"><use href="#al"/></svg></button><button class="raised arrow ms-auto" aria-label="Scroll right"><svg width="8" height="12" fill="#a0a0a0"><use href="#ar"/></svg></button></div>
        </div>

        <div class="wcol">
          <div class="wtop black"><svg class="wave-svg"><path d="M318 3v24" stroke="#ffcc00" stroke-width="4"/></svg></div>
          <div class="wbody black"><svg class="wave-svg">
            <g id="gridlines" stroke="#6e6e6e" stroke-width="2"></g>
            <g fill="none" stroke-width="2">
              <path d="M1 16h75M1 92h75M1 347h75" stroke="#d80000"/>
              <path d="M0 42v8h76V32M0 67v9h76M1 152h75M1 177h75M1 203h75M1 228h75M1 254h75M1 279h75M1 305h75M1 330h75" stroke="#00c800"/>
              <path d="M76 108H2l-2 9 2 9h74" stroke="#9ce09c"/>
            </g>
            <text x="2" y="123" fill="#fff">0</text>
            <path d="M318 0v2000" stroke="#ffcc00" stroke-width="4"/>
          </svg></div>
          <div class="wtime black"><svg class="wave-svg">
            <g id="ticks" stroke="#00d800" stroke-width="2"></g>
            <g id="labels" fill="#00e000" text-anchor="middle"></g>
            <path d="M0 35h3000" stroke="#7a7a7a" stroke-width="2"/>
            <path d="M318 0v35" stroke="#ffcc00" stroke-width="4"/><path d="M318 5v6M318 20v11" stroke="#ff6a00" stroke-width="2"/>
            <rect x="283" y="37" width="70" height="22" fill="#000" stroke="#e0b400" stroke-width="2"/>
            <text x="318" y="54" fill="#ffcc00" text-anchor="middle">0.021 ns</text>
          </svg></div>
          <div class="wscroll hbar m-0 d-flex"><button class="raised arrow" aria-label="Scroll left"><svg width="8" height="12"><use href="#al"/></svg></button><span class="raised flex-grow-1 position-relative"><svg class="position-absolute top-0" style="left:36%" width="2" height="25"><path d="M1 0v25" stroke="#ffdc2a" stroke-width="2"/></svg></span><button class="raised arrow" aria-label="Scroll right"><svg width="8" height="12"><use href="#ar"/></svg></button></div>
        </div>

        <div class="wcol">
          <div class="wtop grey"></div>
          <div class="wbody d-flex flex-column"><button class="raised" style="height:24px" aria-label="Scroll up"><svg width="12" height="8"><use href="#au"/></svg></button><span class="raised border-bottom-0" style="height:194px"></span><span class="white" style="height:24px"></span><span class="raised border-top-0 flex-grow-1"></span><button class="raised" style="height:24px" aria-label="Scroll down"><svg width="12" height="8"><use href="#ad"/></svg></button></div>
          <div class="wtime grey"></div>
          <div class="wscroll grey"></div>
        </div>
      </div>
    </section>
    <div class="d-flex"><nav class="tabstrip d-flex flex-grow-1">
      <a class="nav-link active" href="#"><svg width="24" height="22"><use href="#waveico"/></svg>Wave<span class="tabx">✕</span></a>
      <a class="nav-link" href="#"><svg width="24" height="22"><use href="#file"/></svg>nocdc.v<span class="tabx">✕</span></a>
      <a class="nav-link" href="#"><svg width="24" height="22"><use href="#file"/></svg>nocdc.vt<span class="tabx">✕</span></a>
    </nav><button class="raised tscroll" aria-label="Previous tab"><svg width="8" height="12"><use href="#gl"/></svg></button><button class="raised tscroll" aria-label="Next tab"><svg width="8" height="12"><use href="#gr"/></svg></button></div>
  </div>
</main>

<footer class="transcript">
  <div class="phead d-flex align-items-center">
    <svg width="20" height="22"><rect x="2" y="2" width="16" height="20" rx="5" fill="#fff" stroke="#777" stroke-width="4"/></svg><span>Transcript</span>
    <div class="rails d-flex align-items-center"><span class="rail"></span><span class="dots"></span><span class="rail"></span></div>
    <div class="pbtns d-flex"><button class="pbtn" aria-label="Maximize"><svg width="12" height="12"><use href="#pin"/></svg></button><button class="pbtn" aria-label="Undock"><svg width="13" height="13"><use href="#undock"/></svg></button><button class="pbtn" aria-label="Close"><svg width="12" height="12"><use href="#shut"/></svg></button></div>
  </div>
</footer>

<script>
  // One major division is 0.005 ns; the time axis continues past the visible edge.
  const NS = 'http://www.w3.org/2000/svg', major = 76, minorPerMajor = 5;
  const line = (x, y1, y2) => { const p = document.createElementNS(NS, 'path'); p.setAttribute('d', `M${x} ${y1}V${y2}`); return p; };
  for (let i = 1; i < 40; i++) document.getElementById('gridlines').append(line(i * major, 0, 2000));
  for (let i = 1; i < 200; i++) document.getElementById('ticks').append(line(Math.round(i * major / minorPerMajor), i % minorPerMajor ? 5 : 0, 11));
  for (let i = 0; i < 20; i++) {
    const t = document.createElementNS(NS, 'text');
    t.setAttribute('x', i ? i * 2 * major - 1 : 9); t.setAttribute('y', 30);
    t.textContent = (i ? (i / 100).toFixed(2) : '0') + ' ns';
    document.getElementById('labels').append(t);
  }
</script>
</body>
</html>
